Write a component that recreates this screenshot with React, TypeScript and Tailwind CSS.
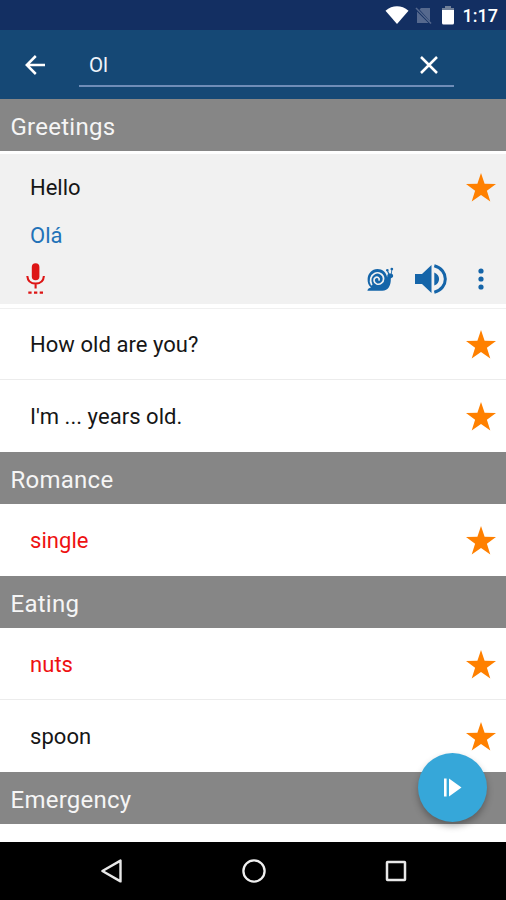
import React from 'react';

const Star = () => (
  <svg className="h-[29px] w-[30px] shrink-0" viewBox="0 0 30 29" fill="#ff8000">
    <path d="M15 0 18.6 10.7 30 10.9 20.9 17.7 24.3 28.6 15 22.1 5.7 28.6 9.1 17.7 0 10.9 11.4 10.7Z" />
  </svg>
);

const Header = ({ title }: { title: string }) => (
  <div className="flex h-[52px] shrink-0 items-center bg-[#868686] pl-[10.5px] pt-[3px] text-[24px] leading-none tracking-[0.25px] text-[#f5f5f5]">
    {title}
  </div>
);

const Row = ({ text, red = false, divider = false }: { text: string; red?: boolean; divider?: boolean }) => (
  <div className={`flex h-[72px] shrink-0 items-center justify-between pl-[30px] pr-[10px] ${divider ? 'border-b border-[#ececec]' : 'border-b border-white'}`}>
    <span className={`pt-[2px] text-[22px] leading-none tracking-[0.05px] ${red ? 'text-[#ee1111]' : 'text-[#161616]'}`}>{text}</span>
    <div className="pt-px"><Star /></div>
  </div>
);

const Snail = () => (
  <svg className="h-[25px] w-[27px]" viewBox="0 0 27 25">
    <path d="M.4 23.7C.7 21.8 2 20.9 4 20.4 1.3 18.4.5 15.8.6 12.1.8 6.3 5 2.1 10.4 2c5 0 9 3.4 9.8 8.6.1-2 .1-3.2 1-3.5L20.1 4.5C18.5 4.3 18.7 2 20.3 2c1.5 0 1.8 1.4 1 2.2l1.1 2.3 1.5-.1.5-3C22.9 2.8 23.3.8 24.8.8c1.8 0 1.8 2.3.4 2.7l-.5 3.2c1.4.6 1.7 1.8 1.3 3.1-.4 1-1.5 1.2-2.2 1.6.3 6.7-2.5 12.3-8.5 12.3Z" fill="#1565a9" />
    <path d="M4.6 17.6C2.5 13.6 3.6 8.3 7.6 6.4c4.2-1.9 9 .8 9 5.3 0 3.9-3.6 6.3-6.8 5.3-3.2-1.1-3.7-5-1.3-6.5 2-1.1 4.2.5 3.6 2.4" fill="none" stroke="#f1f1f1" strokeWidth="1.7" strokeLinecap="round" />
  </svg>
);

export default function App() {
  return (
    <div className="flex h-[900px] w-[506px] flex-col overflow-hidden bg-white font-['Roboto',sans-serif]">
      <div className="flex h-[30px] shrink-0 items-center justify-end bg-[#132f62] pr-[9.5px] text-white">
        <svg className="h-[30px] w-[76px]" viewBox="0 0 76 30">
          <path d="M.5 10.7C7.5 4.9 16.5 4.9 23.5 10.7L12 24Z" fill="#fff" />
          <path d="M36 8h9v13.2L34.5 9.5Z M32 11.5 43.5 23H32Z" fill="#56698e" />
          <path d="M31 8 46 23.5" stroke="#56698e" strokeWidth="1.5" />
          <path d="M60 6h6v2h3v4H57V8h3Z" fill="#718099" />
          <path d="M57 10h12v13a1.5 1.5 0 0 1-1.5 1.5h-9A1.5 1.5 0 0 1 57 23Z" fill="#fff" />
        </svg>
        <span className="ml-[2px] w-[34px] pt-[2px] text-[18px] font-medium leading-none">1:17</span>
      </div>
      <div className="flex h-[69px] shrink-0 bg-[#154875] pl-[25px] pt-[13px]">
        <svg className="mt-[12px] h-[20px] w-[21px]" viewBox="0 0 21 20" fill="none" stroke="#fff" strokeWidth="2.5">
          <path d="M20 10H2M10.8 1 1.8 10l9 9" />
        </svg>
        <div className="ml-[33px] flex h-[44px] w-[375px] items-center justify-between border-b-2 border-[#6f8db8] pl-[10px] pr-[16px]">
          <span className="pt-[3px] text-[20.5px] leading-none text-[#eef3fa]">Ol</span>
          <svg className="mt-px h-[18px] w-[18px]" viewBox="0 0 18 18" stroke="#fff" strokeWidth="2.5">
            <path d="m1 1 16 16M17 1 1 17" />
          </svg>
        </div>
      </div>
      <div className="relative flex h-[743px] shrink-0 flex-col overflow-hidden">
        <Header title="Greetings" />
        <div className="flex h-[158px] shrink-0 flex-col border-b border-[#f0f0f0] pb-[4px] pt-[3px]">
          <div className="h-[150px] bg-[#f1f1f1] pl-[30px] pr-[10px] pt-[18px]">
            <div className="flex h-[30px] items-center justify-between">
              <span className="pt-[2px] text-[22px] leading-none text-[#161616]">Hello</span>
              <Star />
            </div>
            <div className="mt-[17px] flex h-[30px] items-center pt-[4px] text-[22px] leading-none text-[#2272b8]">Olá</div>
            <div className="-ml-[4px] mt-[14px] flex h-[32px] items-center">
              <svg className="h-[32px] w-[20px]" viewBox="0 0 20 32" fill="#dd1515">
                <rect x="5.8" y="0.3" width="7.6" height="17" rx="3.8" />
                <path d="M1.3 13c.4 5 3.7 7.6 8.3 7.6s7.9-2.6 8.3-7.6M9.6 21v4.6" fill="none" stroke="#dd1515" strokeWidth="2.1" />
                <path d="M2.3 28.4h3.3v2.4H2.3zM8 28.4h3.3v2.4H8zM13.7 28.4h3.3v2.4h-3.3z" />
              </svg>
              <div className="ml-[321px]"><Snail /></div>
              <svg className="ml-[21px] h-[30px] w-[32px]" viewBox="0 0 32 30" fill="#1565a9">
                <path d="M0 10h7l9.5-9v28L7 20H0ZM19.3 8.4c6.4 2.3 6.4 10.9 0 13.2Z" />
                <path d="M19.3 1.8c14.7 3.8 14.7 22.6 0 26.4" fill="none" stroke="#1565a9" strokeWidth="3" />
              </svg>
              <svg className="ml-[31px] h-[22px] w-[6px]" viewBox="0 0 6 22" fill="#1565a9">
                <circle cx="3" cy="3" r="2.6" /><circle cx="3" cy="11" r="2.6" /><circle cx="3" cy="19" r="2.6" />
              </svg>
            </div>
          </div>
        </div>
        <div className="-mt-px shrink-0"><Row text="How old are you?" divider /></div>
        <Row text="I'm ... years old." />
        <Header title="Romance" />
        <Row text="single" red />
        <Header title="Eating" />
        <Row text="nuts" red divider />
        <Row text="spoon" />
        <Header title="Emergency" />
        <div className="absolute right-[19px] top-[654px] flex h-[69px] w-[69px] items-center justify-center rounded-full bg-[#36a7d9] shadow-[0_4px_7px_rgba(0,0,0,0.3)]">
          <svg className="h-[19px] w-[18px]" viewBox="0 0 18 19" fill="#fff">
            <path d="M0 .5h2.6v18H0ZM5 .5l12.5 9L5 18.5Z" />
          </svg>
        </div>
      </div>
      <div className="flex h-[58px] items-center bg-black pl-[100px]">
        <svg className="h-[24px] w-[22px]" viewBox="0 0 22 24" fill="none" stroke="#e8e8e8" strokeWidth="2.4" strokeLinejoin="round">
          <path d="M20.5 1.6v20.8L2.4 12Z" />
        </svg>
        <svg className="ml-[119px] h-[26px] w-[26px]" viewBox="0 0 26 26" fill="none" stroke="#f0f0f0" strokeWidth="2.3">
          <circle cx="13" cy="13" r="10.6" />
        </svg>
        <svg className="ml-[118px] h-[22px] w-[22px]" viewBox="0 0 22 22" fill="none" stroke="#e8e8e8" strokeWidth="2.5">
          <rect x="2" y="2" width="18" height="18" rx=".5" />
        </svg>
      </div>
    </div>
  );
}
